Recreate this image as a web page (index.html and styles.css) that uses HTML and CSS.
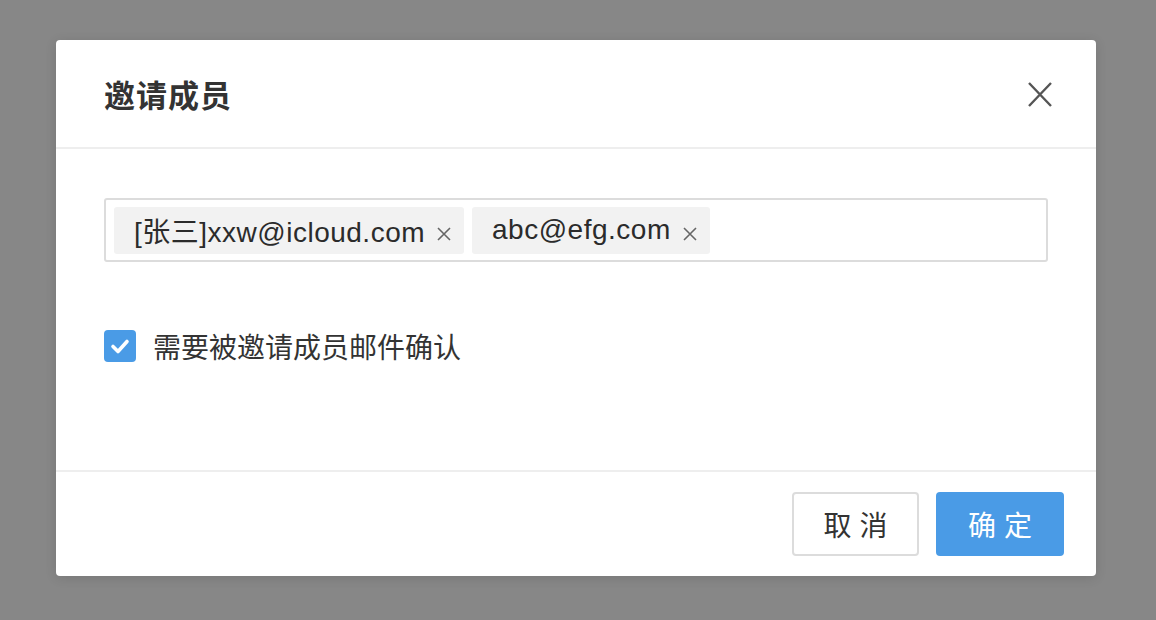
FILE: index.html
```html
<!DOCTYPE html>
<html lang="zh">
<head>
<meta charset="utf-8">
<title>邀请成员</title>
<link rel="stylesheet" href="styles.css">
</head>
<body>
<div class="modal">
  <div class="modal-header">
    <h1 class="modal-title">邀请成员</h1>
    <button class="close-btn" aria-label="关闭">
      <svg width="24" height="25" viewBox="0 0 24 25"><path d="M1 1 L23 24 M23 1 L1 24" stroke="#555" stroke-width="2.4" fill="none"/></svg>
    </button>
  </div>
  <div class="modal-body">
    <div class="tag-input">
      <span class="tag"><span class="tag-text">[张三]xxw@icloud.com</span><svg class="tag-x" width="14" height="14" viewBox="0 0 14 14"><path d="M1 1 L13 13 M13 1 L1 13" stroke="#666" stroke-width="1.6" fill="none"/></svg></span>
      <span class="tag"><span class="tag-text">abc@efg.com</span><svg class="tag-x" width="14" height="14" viewBox="0 0 14 14"><path d="M1 1 L13 13 M13 1 L1 13" stroke="#666" stroke-width="1.6" fill="none"/></svg></span>
    </div>
    <label class="check-row">
      <span class="checkbox"><svg width="32" height="32" viewBox="0 0 32 32"><path d="M9 16.5 L14 21.5 L23 11.5" stroke="#fff" stroke-width="3.6" fill="none" stroke-linecap="round" stroke-linejoin="round"/></svg></span>
      <span class="check-label">需要被邀请成员邮件确认</span>
    </label>
  </div>
  <div class="modal-footer">
    <button class="btn btn-cancel">取 消</button>
    <button class="btn btn-primary">确 定</button>
  </div>
</div>
</body>
</html>
```
FILE: styles.css
```css
html, body {
  margin: 0;
  padding: 0;
}
body {
  background: #878787;
  padding: 40px 0 0 56px;
  height: 620px;
  box-sizing: border-box;
  font-family: "Liberation Sans", "Noto Sans CJK SC", sans-serif;
  color: #333;
}
.modal {
  width: 1040px;
  height: 536px;
  background: #fff;
  border-radius: 4px;
  box-shadow: 0 2px 12px rgba(0,0,0,0.12);
  display: flex;
  flex-direction: column;
}
.modal-header {
  height: 107px;
  border-bottom: 2px solid #eeeeee;
  display: flex;
  align-items: center;
  justify-content: space-between;
  padding: 0 44px 0 48px;
}
.modal-title {
  margin: 0;
  font-size: 31px;
  font-weight: bold;
  color: #333;
  letter-spacing: 1px;
}
.close-btn {
  border: 0;
  background: none;
  padding: 0;
  margin-top: 2px;
  display: flex;
}
.modal-body {
  height: 321px;
  box-sizing: border-box;
  padding: 49px 48px 0;
}
.tag-input {
  height: 64px;
  box-sizing: border-box;
  border: 2px solid #dcdcdc;
  border-radius: 3px;
  display: flex;
  align-items: center;
  gap: 8px;
  padding: 0 8px;
}
.tag {
  height: 47px;
  background: #f2f2f2;
  border-radius: 3px;
  display: flex;
  align-items: center;
  padding: 0 13px 0 20px;
  font-size: 28px;
  letter-spacing: 0.5px;
  color: #2b2b2b;
}
.tag-x {
  margin-left: 12px;
  margin-top: 7px;
}
.check-row {
  margin-top: 64px;
  display: flex;
  align-items: center;
  gap: 17px;
}
.checkbox {
  width: 32px;
  height: 32px;
  border-radius: 4px;
  background: #4a9be6;
  display: flex;
}
.check-label {
  font-size: 28px;
  color: #333;
}
.modal-footer {
  border-top: 2px solid #eeeeee;
  flex: 1;
  display: flex;
  justify-content: flex-end;
  align-items: flex-start;
  gap: 17px;
  padding: 20px 32px 0 0;
}
.btn {
  height: 64px;
  border-radius: 4px;
  font-family: "Liberation Sans", "Noto Sans CJK SC", sans-serif;
  font-size: 28px;
  box-sizing: border-box;
  cursor: pointer;
}
.btn-cancel {
  width: 127px;
  background: #fff;
  border: 2px solid #dcdcdc;
  color: #333;
}
.btn-primary {
  width: 128px;
  background: #4a9be6;
  border: 0;
  color: #fff;
}
```
